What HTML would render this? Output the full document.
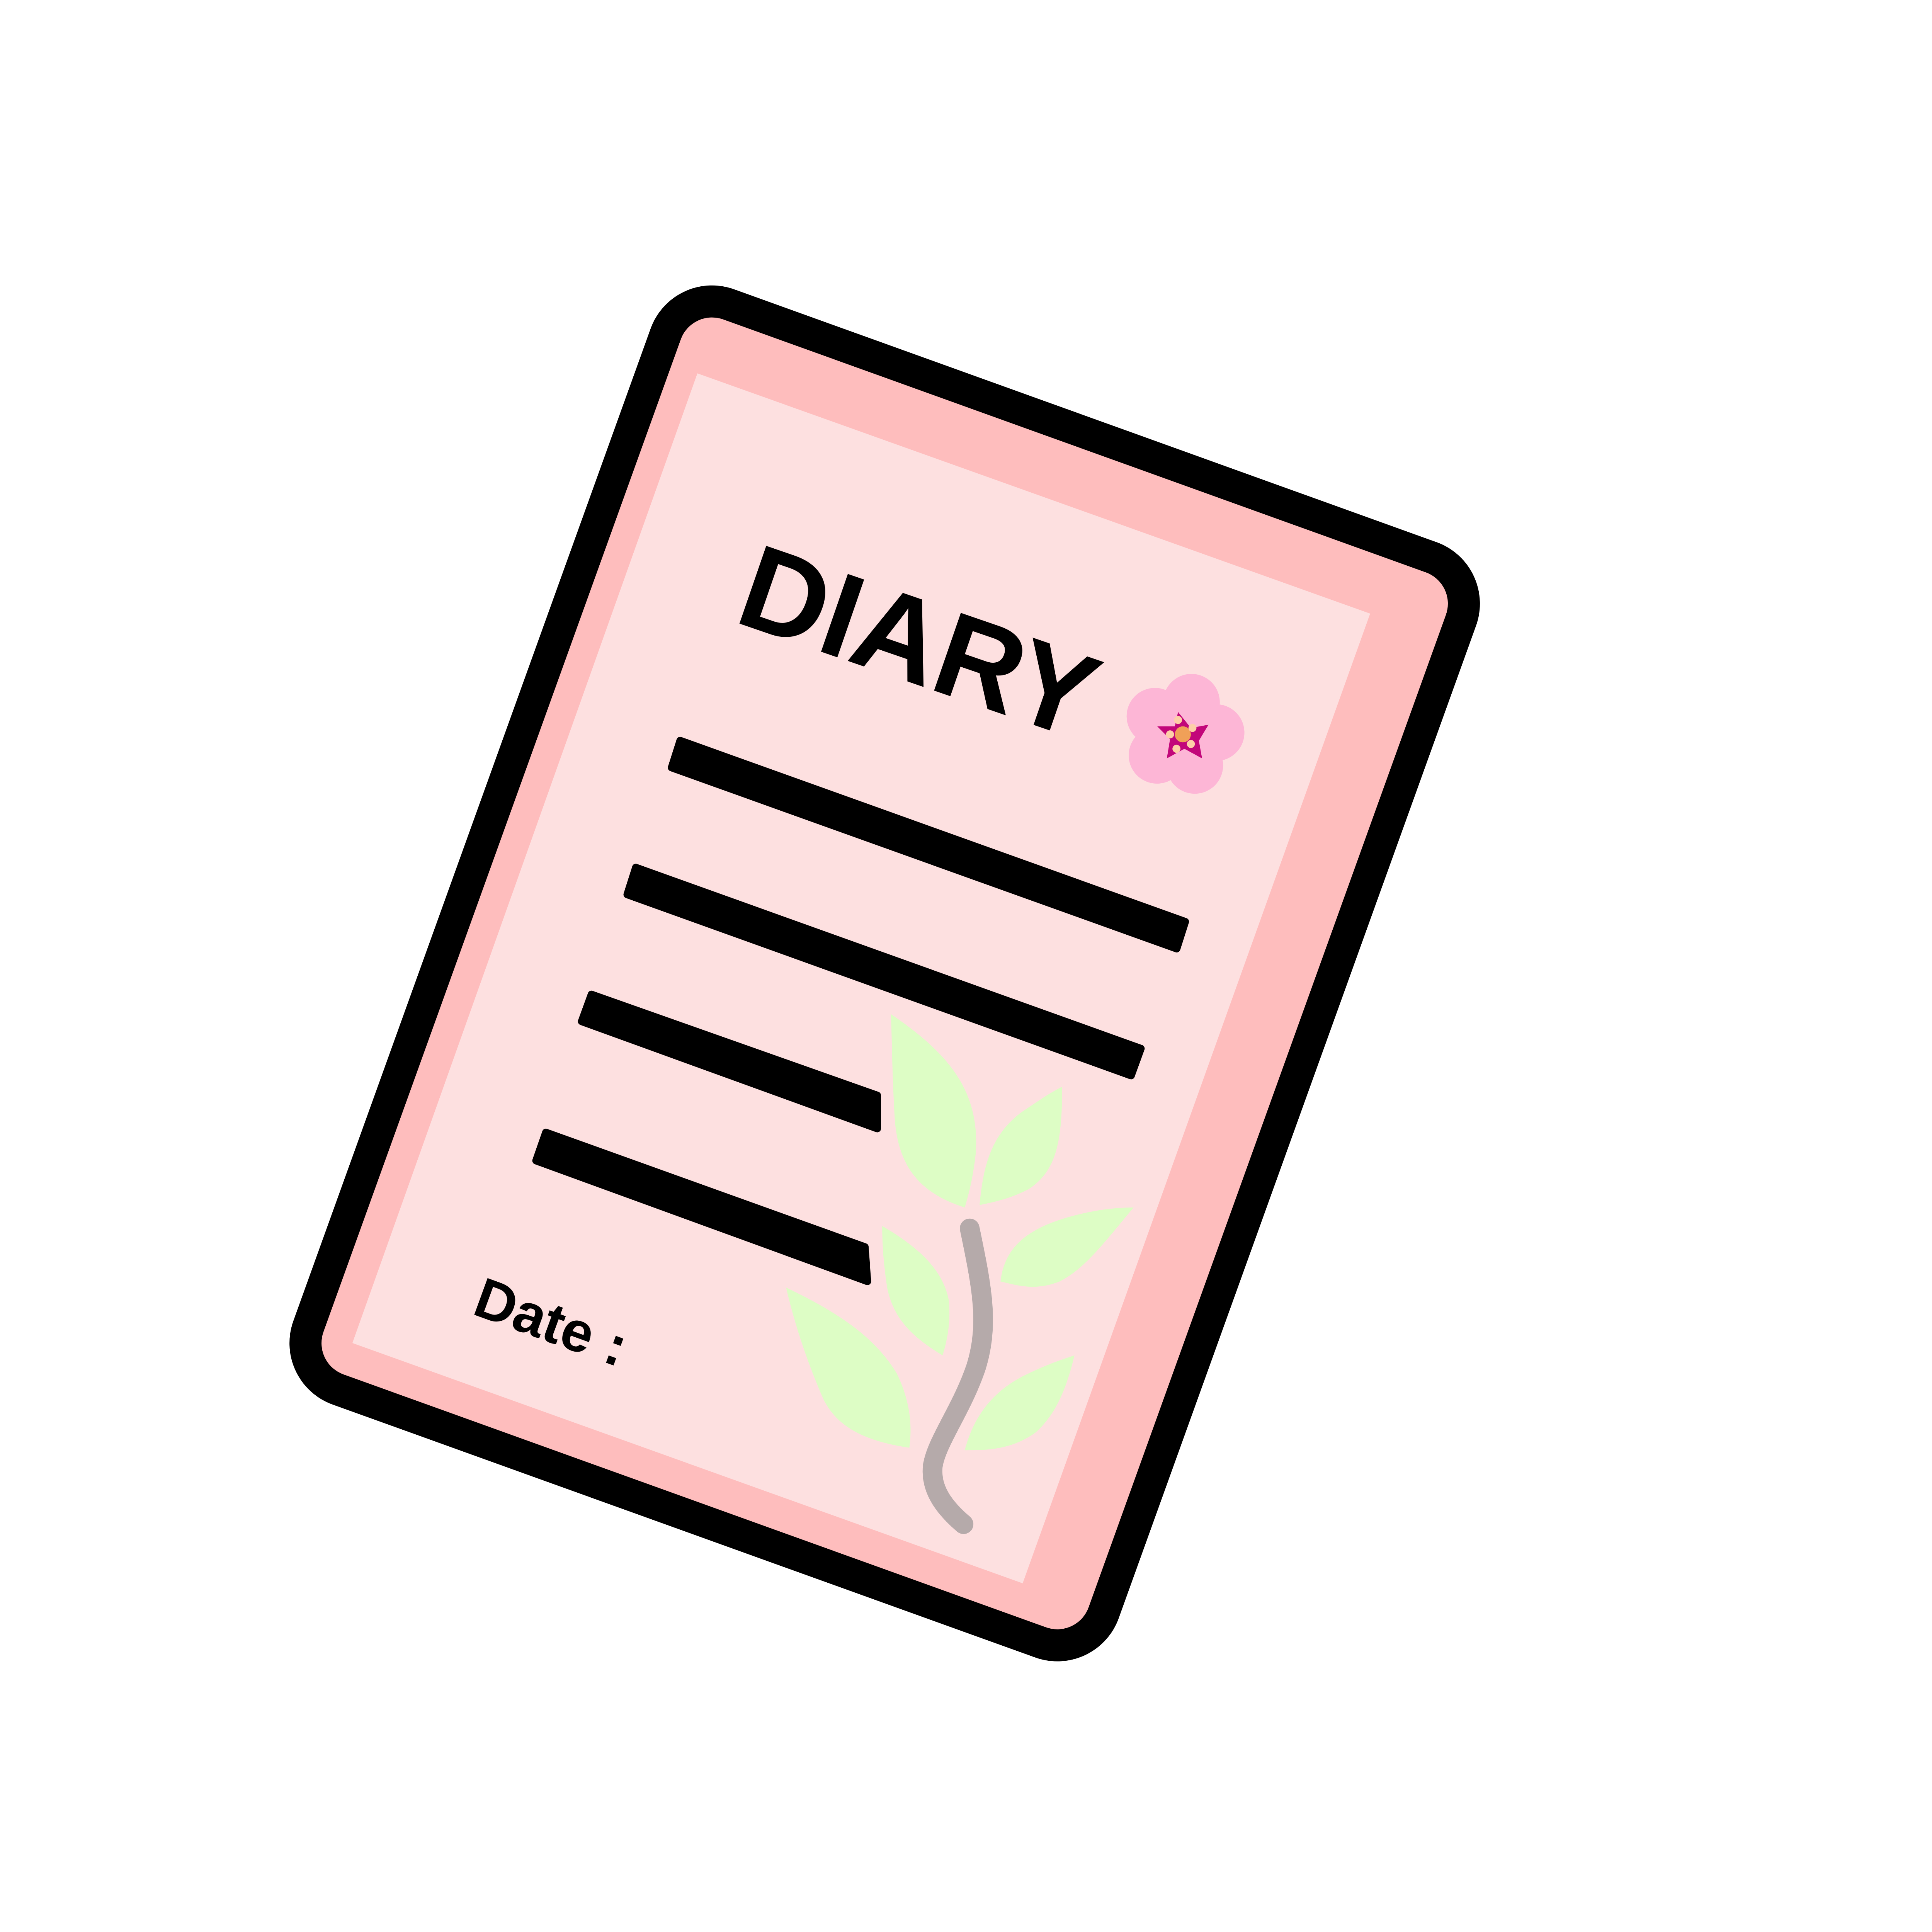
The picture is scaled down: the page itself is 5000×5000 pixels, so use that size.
<!DOCTYPE html>
<html><head><meta charset="utf-8"><style>html,body{margin:0;padding:0;background:#fff}svg{display:block}</style></head>
<body>
<svg width="5000" height="5000" viewBox="0 0 1568 1568" xmlns="http://www.w3.org/2000/svg">
<rect width="1568" height="1568" fill="#fff"/>
<g transform="rotate(19.8 718 790)">
<rect x="375" y="322" width="686" height="936" rx="40" fill="#FEBDBD" stroke="#000" stroke-width="26"/>
</g>
<polygon points="566,303 1112,498 830,1285 286,1090" fill="#FDE0E0"/>
<g fill="#000" stroke="#000" stroke-width="6" stroke-linejoin="round">
<polygon points="552,601 962,748 955,770 545,623"/>
<polygon points="516,704 926,851 918,873 509,726"/>
<polygon points="480,807 712,889 712,916 472,829"/>
<polygon points="443,919 702,1012 704,1040 435,942"/>
</g>
<text x="0" y="0" transform="translate(594,504) rotate(19)" font-family="Liberation Sans, sans-serif" font-weight="bold" font-size="97" fill="#000">DIARY</text>
<text x="0" y="0" transform="translate(382,1066) rotate(20)" font-family="Liberation Sans, sans-serif" font-weight="bold" font-size="46" fill="#000">Date :</text>
<g fill="#DDFDC5">
<path d="M723,823 C770,855 795,885 792,935 C790,955 786,970 783,980 C745,968 728,945 726,905 C724,870 724,845 723,823 Z"/>
<path d="M862,882 C862,925 858,950 835,965 C820,973 805,976 795,978 C798,945 805,920 830,902 C845,892 852,887 862,882 Z"/>
<path d="M920,980 C895,1010 880,1030 860,1040 C840,1048 825,1043 812,1040 C815,1015 830,1000 860,990 C885,982 905,980 920,980 Z"/>
<path d="M716,995 C745,1012 765,1030 770,1055 C772,1075 768,1090 765,1100 C740,1085 725,1070 720,1045 C717,1025 716,1010 716,995 Z"/>
<path d="M638,1045 C680,1065 710,1085 728,1115 C740,1140 740,1160 738,1175 C705,1170 680,1160 668,1135 C655,1105 645,1075 638,1045 Z"/>
<path d="M872,1100 C865,1130 855,1150 840,1163 C820,1177 800,1177 783,1177 C790,1150 805,1130 830,1117 C848,1108 860,1104 872,1100 Z"/>
</g>
<path d="M787,997 C797,1045 803,1075 792,1110 C780,1145 760,1170 757,1190 C755,1210 768,1225 782,1237" fill="none" stroke="#B5AAAA" stroke-width="16" stroke-linecap="round"/>
<g transform="translate(960,596)">
<g fill="#FDB3D6" opacity="0.92">
<circle cx="0" cy="-27" r="23" transform="rotate(15)"/>
<circle cx="0" cy="-27" r="23" transform="rotate(87)"/>
<circle cx="0" cy="-27" r="23" transform="rotate(159)"/>
<circle cx="0" cy="-27" r="23" transform="rotate(231)"/>
<circle cx="0" cy="-27" r="23" transform="rotate(303)"/>
</g>
<g transform="scale(1.3)">
<polygon points="-3,-14 5,-4 16,-6 10,4 12,15 1,9 -10,15 -8,3 -16,-5 -5,-5" fill="#C2077A"/>
<circle cx="0" cy="0" r="5" fill="#F0A058"/>
<g fill="#FDCFA8">
<circle cx="-3" cy="-9" r="2.5"/><circle cx="6" cy="-4" r="2.5"/><circle cx="5" cy="6" r="2.5"/><circle cx="-4" cy="9" r="2.5"/><circle cx="-8" cy="0" r="2.5"/>
</g>
</g>
</g>
</svg>
</body></html>
